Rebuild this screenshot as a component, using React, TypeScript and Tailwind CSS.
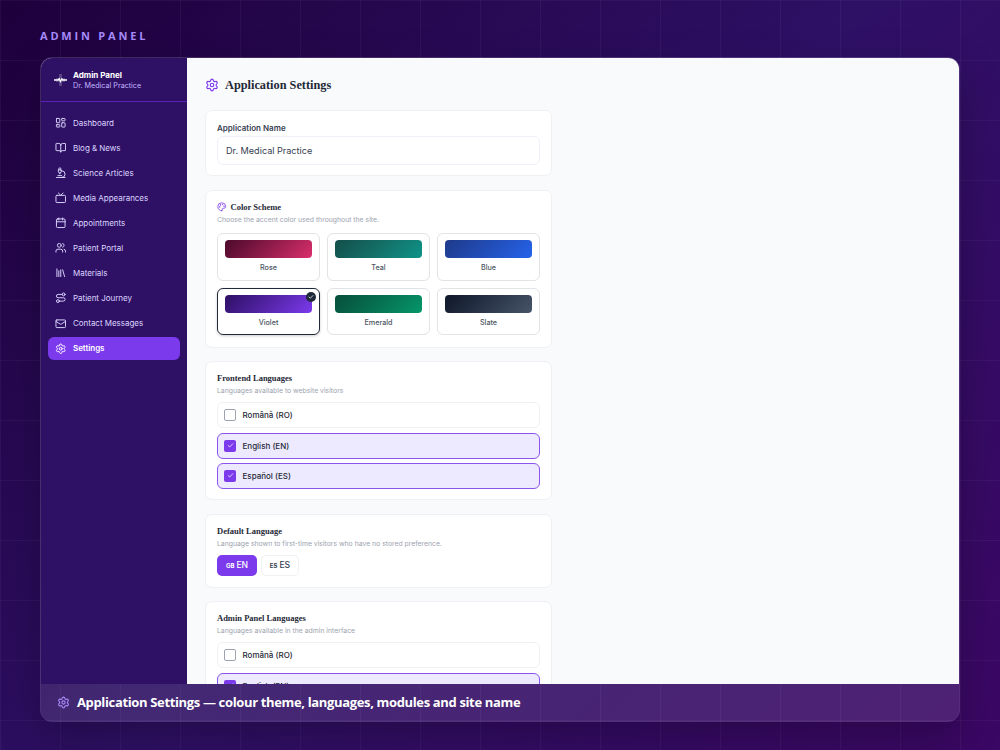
import type { ReactNode } from "react";
import {
  BookOpen,
  Calendar,
  Check,
  LayoutDashboard,
  Library,
  Mail,
  Microscope,
  Palette,
  Route,
  Settings,
  Tv,
  Users,
} from "lucide-react";

const navItems = [
  { label: "Dashboard", icon: LayoutDashboard },
  { label: "Blog & News", icon: BookOpen },
  { label: "Science Articles", icon: Microscope },
  { label: "Media Appearances", icon: Tv },
  { label: "Appointments", icon: Calendar },
  { label: "Patient Portal", icon: Users },
  { label: "Materials", icon: Library },
  { label: "Patient Journey", icon: Route },
  { label: "Contact Messages", icon: Mail },
];

const schemes = [
  { name: "Rose", swatch: "from-[#4c0a2b] to-[#db2f6c]" },
  { name: "Teal", swatch: "from-[#134e4a] to-[#0d9488]" },
  { name: "Blue", swatch: "from-[#1e3a8a] to-[#2563eb]" },
  { name: "Violet", swatch: "from-[#2e1065] to-[#7c3aed]", selected: true },
  { name: "Emerald", swatch: "from-[#064e3b] to-[#059669]" },
  { name: "Slate", swatch: "from-[#0f172a] to-[#475569]" },
];

const languages = [
  { name: "Română (RO)", checked: false },
  { name: "English (EN)", checked: true },
  { name: "Español (ES)", checked: true },
];

export default function App() {
  return (
    <div className="h-[750px] w-[1000px] overflow-hidden bg-[linear-gradient(135deg,#1e003c_0%,#2e1065_50%,#3b0764_100%)] font-['Inter',sans-serif]">
      <div className="flex h-full w-full flex-col bg-[linear-gradient(rgba(255,255,255,0.04)_1px,transparent_1px),linear-gradient(90deg,rgba(255,255,255,0.04)_1px,transparent_1px)] bg-[size:60px_60px] px-10 pt-[28px]">
        <div className="h-[29px] font-['Open_Sans',sans-serif] text-[11px] leading-[15px] font-bold tracking-[2.8px] text-[#a78bfa]">
          ADMIN PANEL
        </div>
        <div className="flex h-[665px] w-[920px] flex-col overflow-hidden rounded-xl border border-white/15 shadow-[0_16px_40px_rgba(0,0,0,0.25)]">
          <div className="flex h-[626px] shrink-0 overflow-hidden bg-[#f9fafc]">
            <Sidebar />
            <Content />
          </div>
          <div className="flex flex-1 items-center bg-white/10 pl-4">
            <Settings size={13} strokeWidth={2} className="text-[#a78bfa]" />
            <span className="ml-[7px] font-['Open_Sans',sans-serif] text-[13px] font-bold tracking-[-0.35px] whitespace-nowrap text-white">
              Application Settings — colour theme, languages, modules and site name
            </span>
          </div>
        </div>
      </div>
    </div>
  );
}

function Sidebar() {
  return (
    <div className="w-[146px] shrink-0 bg-[#2e1065]">
      <div className="flex h-11 items-center border-b border-[#5b21b6] pl-[13px]">
        <Logo />
        <div className="ml-[6px]">
          <div className="text-[8.1px] leading-[11px] font-bold tracking-[-0.05px] whitespace-nowrap text-white">
            Admin Panel
          </div>
          <div className="text-[7.2px] leading-[9px] whitespace-nowrap text-[#c4b5fd]">Dr. Medical Practice</div>
        </div>
      </div>
      <nav className="flex flex-col gap-[2.1px] px-[7px] pt-[9px] text-[8px] tracking-[-0.03px] text-[#ddd6fe]">
        {navItems.map(({ label, icon: Icon }) => (
          <div key={label} className="flex h-[23px] items-center gap-[7px] pl-[6.5px]">
            <Icon size={11.5} strokeWidth={2} />
            <span>{label}</span>
          </div>
        ))}
        <div className="flex h-[23px] items-center gap-[7px] rounded-[6px] bg-[#7c3aed] pl-[6.5px] font-semibold text-white">
          <Settings size={11.5} strokeWidth={2} />
          <span>Settings</span>
        </div>
      </nav>
    </div>
  );
}

function Content() {
  return (
    <main className="flex flex-1 flex-col gap-[13.6px] pt-[17px] pl-[18px]">
      <div className="mb-[1.4px] flex h-5 shrink-0 items-center">
        <Settings size={14} strokeWidth={2} className="text-[#7c3aed]" />
        <h1 className="ml-[6px] font-['Liberation_Serif',serif] text-[12.3px] font-bold whitespace-nowrap text-[#1f2937]">
          Application Settings
        </h1>
      </div>

      <Card className="h-[66px]">
        <div className="text-[8px] leading-[12px] font-semibold text-[#374151]">Application Name</div>
        <div className="mt-[2px] flex h-[29px] items-center rounded-[6px] border border-[#f1eff8] pl-[8px] text-[9.1px] text-[#374151]">
          Dr. Medical Practice
        </div>
      </Card>

      <Card className="h-[158px]">
        <div className="flex h-[11px] items-center">
          <Palette size={9.5} strokeWidth={2} className="text-[#7c3aed]" />
          <Heading className="ml-1">Color Scheme</Heading>
        </div>
        <Hint>Choose the accent color used throughout the site.</Hint>
        <div className="mt-[8.4px] grid grid-cols-3 gap-[7px]">
          {schemes.map((scheme) => (
            <div
              key={scheme.name}
              className={
                scheme.selected
                  ? "relative flex h-[47.6px] flex-col rounded-[6px] border-[1.5px] border-[#1f2937] p-[7px] pt-[6px] shadow-[0_1px_3px_rgba(0,0,0,0.2)]"
                  : "relative flex h-[47.6px] flex-col rounded-[6px] border border-[#e1e3e7] p-[7px] pt-[6px]"
              }
            >
              <div className={`h-[18px] shrink-0 rounded-[4px] bg-linear-135 ${scheme.swatch}`} />
              <div className="mt-1 text-center text-[7.2px] leading-[11px] font-medium text-[#4b5563]">{scheme.name}</div>
              {scheme.selected && (
                <div className="absolute top-[3px] right-[3px] flex size-[10px] items-center justify-center rounded-full bg-[#1f2937] text-white">
                  <Check size={6} strokeWidth={3} />
                </div>
              )}
            </div>
          ))}
        </div>
      </Card>

      <Card className="h-[139px]">
        <Heading>Frontend Languages</Heading>
        <Hint>Languages available to website visitors</Hint>
        <LanguageList />
      </Card>

      <Card className="h-[74px]">
        <Heading>Default Language</Heading>
        <Hint>Language shown to first-time visitors who have no stored preference.</Hint>
        <div className="mt-[6px] flex gap-[4px] text-[8.6px] font-medium">
          <div className="flex h-[21px] w-10 items-center justify-center gap-[2px] rounded-[5px] bg-[#7c3aed] text-white">
            <span className="pt-px text-[6px] font-bold">GB</span>EN
          </div>
          <div className="flex h-[21px] w-[38px] items-center justify-center gap-[2px] rounded-[5px] border border-[#f0f1f4] text-[#374151]">
            <span className="pt-px text-[6px] font-bold">ES</span>ES
          </div>
        </div>
      </Card>

      <Card className="h-[139px]">
        <Heading>Admin Panel Languages</Heading>
        <Hint>Languages available in the admin interface</Hint>
        <LanguageList />
      </Card>
    </main>
  );
}

function Card({ className, children }: { className: string; children: ReactNode }) {
  return (
    <section className={`w-[347px] shrink-0 rounded-[7px] border border-[#eef0f3] bg-white px-[11px] pt-[11px] ${className}`}>
      {children}
    </section>
  );
}

function Heading({ className = "", children }: { className?: string; children: ReactNode }) {
  return (
    <h2 className={`font-['Liberation_Serif',serif] text-[8.5px] leading-[11px] font-bold whitespace-nowrap text-[#1f2937] ${className}`}>
      {children}
    </h2>
  );
}

function Hint({ children }: { children: ReactNode }) {
  return <p className="mt-[2px] text-[6.85px] leading-[10px] whitespace-nowrap text-[#9ca3af]">{children}</p>;
}

function LanguageList() {
  return (
    <div className="mt-[6px] flex flex-col gap-[4.4px]">
      {languages.map((lang) => (
        <div
          key={lang.name}
          className={
            lang.checked
              ? "flex h-[26px] shrink-0 items-center rounded-[6px] border border-[#8b54ee] bg-[#ede9fe] pl-[6px]"
              : "flex h-[26px] shrink-0 items-center rounded-[6px] border border-[#f0f1f4] pl-[6px]"
          }
        >
          {lang.checked ? (
            <div className="flex size-3 items-center justify-center rounded-[2px] bg-[#7c3aed] text-white">
              <Check size={7} strokeWidth={2.6} />
            </div>
          ) : (
            <div className="size-3 rounded-[2px] border border-[#9ca3af] bg-white" />
          )}
          <span className="ml-[6.5px] text-[8px] font-medium text-[#1f2937]">{lang.name}</span>
        </div>
      ))}
    </div>
  );
}

function Logo() {
  return (
    <svg className="h-[14px] w-[13px]" viewBox="0 0 13 14" fill="none">
      <path d="M5 1h3v4h3v4H8v4H5V9H2V5h3z" fill="#fff" fillOpacity="0.22" />
      <path d="M0 7h4.2l1-1.3 1.2 2.8L7.8 6l.8 1H13" stroke="#fff" strokeWidth="1.3" />
    </svg>
  );
}
